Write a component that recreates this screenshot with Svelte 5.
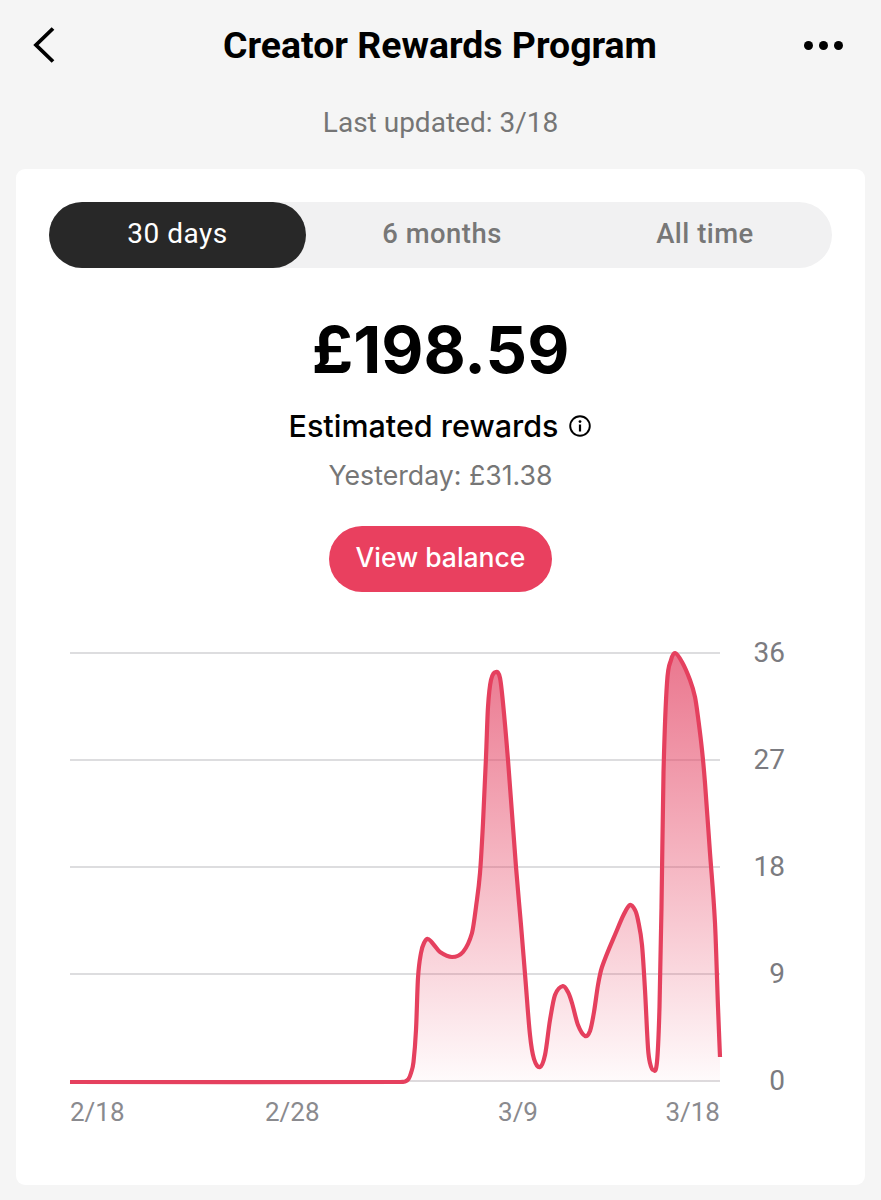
<script>
  const pts = [[70,1082],[399,1082],[405,1081.5],[408.5,1079],[411,1073],[413.5,1062],[416,1030],[418,978],[421,953],[424,943],[428,939],[434,945],[440,952],[452,957],[463,952],[472,933],[476,907],[480,873],[483,823],[486,757],[488,707],[491,680],[496,672],[500,678],[503,703],[508,760],[516,867],[521,925],[525,974],[530,1035],[534,1059],[540,1067],[545,1055],[550,1020],[555,995],[563,986],[568,992],[572,1003],[578,1025],[585,1036],[590,1031],[594,1012],[598,985],[602,967],[617,930],[624,914],[630,905],[635,910],[638,920],[642,945],[645,990],[648,1048],[650,1063],[653,1070],[657,1062],[659.5,1007],[661.5,907],[663.5,773],[667,683],[671,660],[675,653],[682,662],[690,680],[695,697],[698,717],[702,750],[705,783],[710,853],[715,923],[718,1007],[720,1057]];
  function smooth(p){
    const slope=i=>{
      const a=p[Math.max(i-1,0)],c=p[Math.min(i+1,p.length-1)];
      return (c[1]-a[1])/(c[0]-a[0]);
    };
    let d=`M${p[0][0]} ${p[0][1]}`;
    for(let i=0;i<p.length-1;i++){
      const b=p[i],c=p[i+1],h=(c[0]-b[0])/3;
      d+=` C${(b[0]+h).toFixed(1)} ${(b[1]+slope(i)*h).toFixed(1)} ${(c[0]-h).toFixed(1)} ${(c[1]-slope(i+1)*h).toFixed(1)} ${c[0]} ${c[1]}`;
    }
    return d;
  }
  const line=smooth(pts);
  const area=line+' L720 1082 L70 1082 Z';
  const grid=[[653,'36'],[760,'27'],[867,'18'],[974,'9'],[1081,'0']];
  const xlabels=[[70,'2/18','start'],[265,'2/28','start'],[518,'3/9','middle'],[720,'3/18','end']];
</script>

<div class="page">
  <header class="top">
    <svg class="back" width="22" height="36" viewBox="0 0 22 36"><path d="M20 1.5 L3 18 L20 34.5" fill="none" stroke="#000" stroke-width="3.8"/></svg>
    <h1>Creator Rewards Program</h1>
    <div class="dots"><i></i><i></i><i></i></div>
  </header>
  <p class="updated">Last updated: 3/18</p>
  <main class="card">
    <div class="seg">
      <div class="opt on">30 days</div>
      <div class="opt">6 months</div>
      <div class="opt">All time</div>
    </div>
    <div class="amount">£198.59</div>
    <div class="est">Estimated rewards
      <svg width="24" height="24" viewBox="0 0 24 24"><circle cx="12" cy="12" r="9.8" fill="none" stroke="#000" stroke-width="1.9"/><circle cx="12" cy="7.6" r="1.4"/><rect x="10.9" y="10.5" width="2.2" height="7"/></svg>
    </div>
    <div class="yest">Yesterday: £31.38</div>
    <div class="btn">View balance</div>
    <svg class="chart" width="849" height="510" viewBox="16 630 849 510">
      <defs>
        <linearGradient id="fill" x1="0" y1="653" x2="0" y2="1082" gradientUnits="userSpaceOnUse">
          <stop offset="0" stop-color="#e34a69" stop-opacity=".75"/>
          <stop offset="1" stop-color="#e9405f" stop-opacity=".02"/>
        </linearGradient>
      </defs>
      {#each grid as [y,l]}
        <line x1="70" x2="720" y1={y} y2={y} stroke="#d2d2d4" stroke-width="1.4"/>
        <text x="785" y={y+9} text-anchor="end" class="ay">{l}</text>
      {/each}
      <path d={area} fill="url(#fill)"/>
      <path d={line} fill="none" stroke="#e5405e" stroke-width="4.2" stroke-linejoin="round"/>
      {#each xlabels as [x,l,a]}
        <text x={x} y="1121" text-anchor={a} class="ax">{l}</text>
      {/each}
    </svg>
  </main>
</div>

<style>
  :global(body){margin:0;background:#f5f5f5;}
  .page{width:881px;height:1200px;background:#f5f5f5;font-family:Inter,"Liberation Sans",sans-serif;overflow:hidden;}
  .top{display:flex;align-items:center;justify-content:space-between;height:90px;padding:0 38px 0 33px;box-sizing:border-box;}
  .back{flex:none;}
  h1{margin:0 0 0 21px;font-size:37.4px;font-weight:700;color:#000;font-family:Roboto,sans-serif;}
  .dots{display:flex;gap:6px;}
  .dots i{width:9px;height:9px;border-radius:50%;background:#000;display:block;}
  .updated{margin:16px 0 0;height:34px;line-height:34px;text-align:center;color:#757575;font-size:28px;font-family:Roboto,sans-serif;}
  .card{margin:29px 16px 0;height:1016px;background:#fff;border-radius:9px;padding-top:33px;box-sizing:border-box;display:flex;flex-direction:column;align-items:center;}
  .seg{width:783px;height:66px;border-radius:33px;background:#f1f1f2;display:grid;grid-template-columns:257px 272px 1fr;align-items:center;text-align:center;font-size:27.4px;font-weight:500;font-family:Roboto,sans-serif;letter-spacing:.5px;color:#777;}
  .opt{height:66px;line-height:64px;}
  .on{background:#282828;color:#fff;border-radius:33px;font-size:28px;font-weight:400;}
  .amount{margin-top:44px;font-size:65px;line-height:76px;font-weight:700;color:#000;}
  .est{margin-top:19px;display:flex;align-items:center;gap:10px;font-size:30.5px;line-height:38px;font-weight:500;color:#000;}
  .yest{margin-top:13px;font-size:26.7px;line-height:34px;color:#767676;font-weight:400;}
  .btn{margin-top:34px;width:223px;height:66px;line-height:62px;border-radius:33px;background:#e9405f;color:#fff;text-align:center;font-size:26.5px;font-weight:500;}
  .chart{display:block;margin-top:38px;flex:none;}
  .ay{font-family:Roboto,sans-serif;font-size:28px;fill:#7b7b80;}
  .ax{font-family:Roboto,sans-serif;font-size:26px;fill:#8a8a8e;}
</style>
